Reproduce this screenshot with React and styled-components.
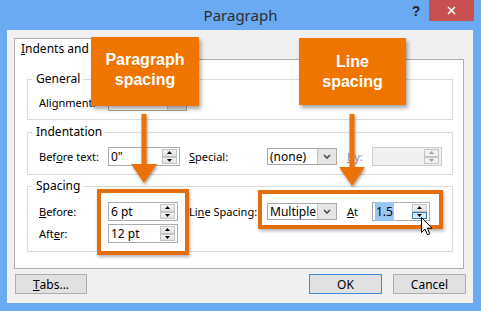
import React from "react";
import styled, { createGlobalStyle } from "styled-components";

const GlobalStyle = createGlobalStyle`
  html, body { margin: 0; padding: 0; }
  body {
    font-family: "Segoe UI", "Noto Sans", "Liberation Sans", sans-serif;
    font-size: 11px;
    color: #000;
  }
`;

const Frame = styled.div`
  position: relative;
  width: 481px;
  height: 311px;
  background: #6aaaf2;
  display: flex;
  flex-direction: column;
  overflow: hidden;
`;

const TitleBar = styled.div`
  height: 30px;
  flex: none;
  display: grid;
  grid-template-columns: 1fr auto 1fr;
  align-items: start;
`;

const Title = styled.div`
  grid-column: 2;
  line-height: 30px;
  font-size: 15px;
  color: #2d2d2d;
`;

const Controls = styled.div`
  grid-column: 3;
  justify-self: end;
  display: flex;
  margin-right: 7px;
`;

const HelpButton = styled.div`
  width: 26px;
  height: 21px;
  display: flex;
  align-items: center;
  justify-content: center;
  font: bold 14px "Liberation Sans", sans-serif;
  color: #1d2733;
`;

const CloseButton = styled.div`
  width: 45px;
  height: 21px;
  background: #c75050;
  display: flex;
  align-items: center;
  justify-content: center;
`;

const Client = styled.div`
  flex: 1;
  margin: 0 8px 8px 7px;
  background: #f0f0f0;
  padding: 8px 9px 0 7px;
  display: flex;
  flex-direction: column;
`;

const TabStrip = styled.div`
  height: 21px;
  display: flex;
  align-items: flex-start;
`;

const Tab = styled.div`
  position: relative;
  z-index: 1;
  box-sizing: border-box;
  height: 22px;
  padding: 0 6px;
  line-height: 20px;
  font-size: 12px;
  background: #fff;
  border: 1px solid #acacac;
  border-bottom: none;
`;

const TabPanel = styled.div`
  box-sizing: border-box;
  height: 210px;
  background: #fff;
  border: 1px solid #acacac;
  padding: 19px 10px 0 12px;
`;

const GroupBox = styled.div`
  border: 1px solid #dcdcdc;
  margin-top: ${p => p.$top || 0}px;
  padding: 0 0 ${p => p.$bottom || 8}px 11px;
`;

const Legend = styled.div`
  width: fit-content;
  margin: -9px 0 0 -7px;
  padding: 0 3px 0 4px;
  line-height: 16px;
  font-size: 12px;
  background: #fff;
`;

const Row = styled.div`
  display: grid;
  grid-template-columns: 69px 81px 78px 80px 25px auto;
  align-items: center;
  height: 19px;
  margin-top: ${p => p.$top || 0}px;
`;

const Label = styled.div`
  white-space: nowrap;
  color: ${p => (p.$disabled ? "#8794ad" : "#000")};
`;

const Select = styled.div`
  box-sizing: border-box;
  width: ${p => p.$width || 70}px;
  height: 17px;
  display: flex;
  border: 1px solid #a8a8a8;
  background: #fff;
`;

const SelectText = styled.div`
  flex: 1;
  padding-left: 2px;
  line-height: 15px;
  font-size: 12px;
  white-space: nowrap;
  overflow: hidden;
`;

const SelectArrow = styled.div`
  width: 18px;
  border-left: 1px solid #c2c2c2;
  background: #e5e5e5;
  display: flex;
  align-items: center;
  justify-content: center;
`;

const SpinField = styled.div`
  box-sizing: border-box;
  width: ${p => p.$width}px;
  height: 19px;
  display: flex;
  border: 1px solid ${p => (p.$disabled ? "#cccccc" : "#abadb3")};
  background: ${p => (p.$disabled ? "#f0f0f0" : "#fff")};
`;

const FieldText = styled.div`
  flex: 1;
  padding-left: 2px;
  line-height: 17px;
  font-size: 12px;
  white-space: nowrap;
`;

const Selected = styled.span`
  background: #99c6f2;
  padding: 1px 1px;
`;

const Spinner = styled.div`
  width: 15px;
  margin: 1px 2px 1px 0;
  display: flex;
  flex-direction: column;
`;

const SpinButton = styled.div`
  flex: 1;
  box-sizing: border-box;
  display: flex;
  align-items: center;
  justify-content: center;
  border: 1px solid ${p => (p.$hover ? "#3c7fb1" : "#c4c4c4")};
  background: ${p =>
    p.$hover ? "#d8eafb" : p.$disabled ? "#f0f0f0" : "linear-gradient(#f3f3f3, #e2e2e2)"};
`;

const ButtonRow = styled.div`
  display: flex;
  margin: 5px -2px 0 1px;
`;

const Button = styled.div`
  box-sizing: border-box;
  width: ${p => p.$width || 73}px;
  height: 20px;
  margin-left: ${p => p.$gap || "0px"};
  border: 1px solid ${p => (p.$default ? "#3d8ddb" : "#adadad")};
  background: #e1e1e1;
  font-size: 12px;
  display: flex;
  align-items: center;
  justify-content: center;
`;

const Callout = styled.div`
  position: absolute;
  left: ${p => p.$x}px;
  top: ${p => p.$y}px;
  width: ${p => p.$w}px;
  height: ${p => p.$h}px;
  box-sizing: border-box;
  padding-top: ${p => p.$pad}px;
  background: #f07400;
  box-shadow: 2px 3px 4px rgba(0, 0, 0, 0.35);
  text-align: center;
  color: #fff;
  font: bold 16px/20px "Liberation Sans", Arial, sans-serif;
  z-index: 3;
`;

const Highlight = styled.div`
  position: absolute;
  left: ${p => p.$x}px;
  top: ${p => p.$y}px;
  width: ${p => p.$w}px;
  height: ${p => p.$h}px;
  box-sizing: border-box;
  border: 4px solid #e56e0c;
  box-shadow: 1px 2px 3px rgba(0, 0, 0, 0.3);
  z-index: 2;
`;

const Overlay = styled.svg`
  position: absolute;
  left: ${p => p.$x}px;
  top: ${p => p.$y}px;
  overflow: visible;
  z-index: 3;
`;

const Up = ({ color = "#000" }) => (
  <svg width="5" height="3" viewBox="0 0 5 3"><path d="M0 3 L2.5 0 L5 3 Z" fill={color} /></svg>
);
const Down = ({ color = "#000" }) => (
  <svg width="5" height="3" viewBox="0 0 5 3"><path d="M0 0 L2.5 3 L5 0 Z" fill={color} /></svg>
);

const Spin = ({ width, value, disabled, hoverDown }) => (
  <SpinField $width={width} $disabled={disabled}>
    <FieldText>{value}</FieldText>
    <Spinner>
      <SpinButton $disabled={disabled}><Up color={disabled ? "#a0a0a0" : "#000"} /></SpinButton>
      <SpinButton $disabled={disabled} $hover={hoverDown}><Down color={disabled ? "#a0a0a0" : "#000"} /></SpinButton>
    </Spinner>
  </SpinField>
);

const Dropdown = ({ width, value }) => (
  <Select $width={width}>
    <SelectText>{value}</SelectText>
    <SelectArrow>
      <svg width="8" height="5" viewBox="0 0 8 5">
        <path d="M1 1 L4 4 L7 1" fill="none" stroke="#444" strokeWidth="1.5" />
      </svg>
    </SelectArrow>
  </Select>
);

const DownArrow = ({ x, y, shaft }) => (
  <Overlay $x={x} $y={y} width="26" height={shaft + 20} style={{ filter: "drop-shadow(1px 2px 1.5px rgba(0,0,0,0.35))" }}>
    <rect x="10.5" y="0" width="5" height={shaft + 1} fill="#ec7208" />
    <path d={`M0 ${shaft} L26 ${shaft} L13 ${shaft + 19} Z`} fill="#ec7208" />
  </Overlay>
);

export default function App() {
  return (
    <Frame>
      <GlobalStyle />
      <TitleBar>
        <Title>Paragraph</Title>
        <Controls>
          <HelpButton>?</HelpButton>
          <CloseButton>
            <svg width="9" height="9" viewBox="0 0 9 9">
              <path d="M1 1 L8 8 M8 1 L1 8" stroke="#fff" strokeWidth="1.6" />
            </svg>
          </CloseButton>
        </Controls>
      </TitleBar>

      <Client>
        <TabStrip>
          <Tab><u>I</u>ndents and Spacing</Tab>
        </TabStrip>
        <TabPanel>
          <GroupBox $bottom={7}>
            <Legend>General</Legend>
            <Row $top={6}>
              <Label>Ali<u>g</u>nment:</Label>
              <Dropdown width={79} value="" />
            </Row>
          </GroupBox>

          <GroupBox $top={12}>
            <Legend>Indentation</Legend>
            <Row $top={7}>
              <Label>Bef<u>o</u>re text:</Label>
              <Spin width={72} value={'0"'} />
              <Label><u>S</u>pecial:</Label>
              <Dropdown value="(none)" />
              <Label $disabled><u>B</u>y:</Label>
              <Spin width={70} value="" disabled />
            </Row>
          </GroupBox>

          <GroupBox $top={11}>
            <Legend>Spacing</Legend>
            <Row $top={8}>
              <Label><u>B</u>efore:</Label>
              <Spin width={70} value="6 pt" />
              <Label>Li<u>n</u>e Spacing:</Label>
              <Dropdown value="Multiple" />
              <Label><u>A</u>t</Label>
              <Spin width={58} value={<Selected>1.5</Selected>} hoverDown />
            </Row>
            <Row $top={3}>
              <Label>Aft<u>e</u>r:</Label>
              <Spin width={70} value="12 pt" />
            </Row>
          </GroupBox>
        </TabPanel>

        <ButtonRow>
          <Button $width={72}><u>T</u>abs...</Button>
          <Button $gap="auto" $default>OK</Button>
          <Button $gap="11px">Cancel</Button>
        </ButtonRow>
      </Client>

      <Callout $x={91} $y={37} $w={108} $h={69} $pad={13}>Paragraph<br />spacing</Callout>
      <Callout $x={299} $y={38} $w={107} $h={67} $pad={14}>Line<br />spacing</Callout>
      <DownArrow x={131} y={114} shaft={50} />
      <DownArrow x={339} y={114} shaft={53} />
      <Highlight $x={97} $y={189} $w={92} $h={66} />
      <Highlight $x={258} $y={190} $w={185} $h={39} />

      <Overlay $x={421} $y={217} width="12" height="19" viewBox="0 0 12 19">
        <path d="M0.5 0.5 L0.5 15.5 L4 12 L6.5 17.8 L8.8 16.8 L6.4 11.2 L11 11.2 Z" fill="#fff" stroke="#000" strokeWidth="1" />
      </Overlay>
    </Frame>
  );
}
